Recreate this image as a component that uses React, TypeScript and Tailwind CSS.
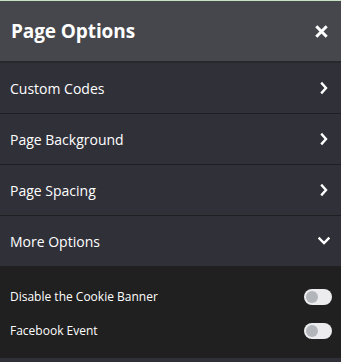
import React from "react";

const Chevron = ({ down = false }: { down?: boolean }) => (
  <svg width="12" height="14" viewBox="0 0 12 14" fill="none" className="shrink-0">
    {down ? (
      <path d="M1.5 4.5 L6 9 L10.5 4.5" stroke="white" strokeWidth="2.4" strokeLinecap="square" />
    ) : (
      <path d="M4 2.5 L8 7 L4 11.5" stroke="white" strokeWidth="2.4" strokeLinecap="square" />
    )}
  </svg>
);

const Toggle = () => (
  <div className="w-[28px] h-[16px] rounded-full bg-[#ececee] flex items-center px-[2px]">
    <div className="w-[12px] h-[12px] rounded-full bg-[#b2b5ba]" />
  </div>
);

const Row = ({ label, down = false }: { label: string; down?: boolean }) => (
  <div className="h-[50px] flex items-center justify-between pl-[10px] pr-[11px] bg-[#303039] text-white text-[14px]">
    <span>{label}</span>
    <Chevron down={down} />
  </div>
);

export default function App() {
  return (
    <div
      className="w-[341px] h-[362px] bg-[#303039] flex flex-col overflow-hidden"
      style={{ fontFamily: '"Open Sans", "Noto Sans", sans-serif' }}
    >
      <div className="h-[1px] bg-[#c5e3c3]" />
      <div className="h-[60px] bg-[#46474c] flex items-center justify-between pl-[11px] pr-[13px]">
        <span className="text-white text-[19px] font-bold tracking-[-0.1px]">Page Options</span>
        <svg width="13" height="13" viewBox="0 0 13 13">
          <path d="M1.3 1.3 L11.7 11.7 M11.7 1.3 L1.3 11.7" stroke="white" strokeWidth="3" />
        </svg>
      </div>
      <div className="h-[2px] bg-[#28282c]" />
      <div className="flex flex-col gap-[1px] bg-[#1f1f23]">
        <Row label="Custom Codes" />
        <Row label="Page Background" />
        <Row label="Page Spacing" />
        <Row label="More Options" down />
      </div>
      <div className="bg-[#202020] h-[92px] flex flex-col justify-center gap-[18px] pt-[3px] pl-[10px] pr-[9px] text-white text-[12px]">
        <div className="flex items-center justify-between h-[16px]">
          <span>Disable the Cookie Banner</span>
          <Toggle />
        </div>
        <div className="flex items-center justify-between h-[16px]">
          <span>Facebook Event</span>
          <Toggle />
        </div>
      </div>
      <div className="flex-1 bg-[#303039]" />
    </div>
  );
}
